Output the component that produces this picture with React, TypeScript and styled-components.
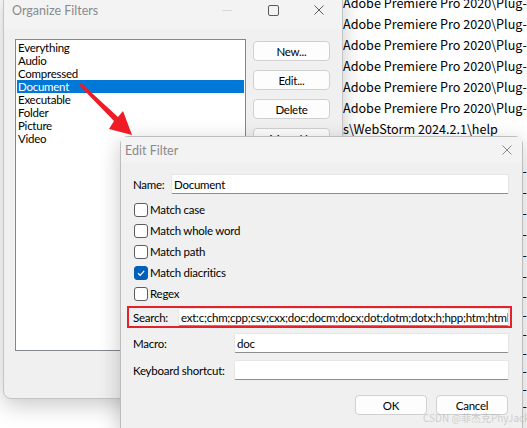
import React from "react";
import styled, { createGlobalStyle } from "styled-components";

const Global = createGlobalStyle`
  html, body { margin: 0; padding: 0; background: #ffffff; }
  body { width: 527px; height: 428px; overflow: hidden; }
  * { box-sizing: border-box; }
`;

const UI_FONT = `"Segoe UI", Lato, "Noto Sans", sans-serif`;

const Desktop = styled.div`
  position: relative;
  width: 527px;
  height: 428px;
  overflow: hidden;
  background: #ffffff;
  font-family: ${UI_FONT};
  font-size: 11.5px;
  letter-spacing: -0.25px;
  color: #000;
`;

const BackList = styled.div`
  position: absolute;
  left: 343px;
  top: -8px;
  display: flex;
  flex-direction: column;
  font-family: "Noto Sans CJK SC", "Noto Sans", sans-serif;
  font-size: 12.6px;
  letter-spacing: 0;
  color: #000;
  white-space: nowrap;
`;

const BackLine = styled.div<{ $h: number }>`
  height: ${(p) => p.$h}px;
  line-height: ${(p) => p.$h}px;
`;

const Win = styled.div`
  position: absolute;
  background: #f0f0f0;
  border: 1px solid #c4c4c4;
  box-shadow: 0 6px 22px rgba(0, 0, 0, 0.22);
  display: flex;
  flex-direction: column;
`;

const OrganizeWin = styled(Win)`
  left: 3px;
  top: -10px;
  width: 340px;
  height: 409px;
  border-radius: 8px;
`;

const TitleBar = styled.div<{ $h: number }>`
  height: ${(p) => p.$h}px;
  flex: none;
  display: flex;
  align-items: center;
  background: #f3f3f3;
  color: #8a8a8a;
  font-size: 12.5px;
  letter-spacing: 0;
  position: relative;
`;

const TitleText = styled.span<{ $pl: number }>`
  padding-left: ${(p) => p.$pl}px;
  flex: 1;
`;

const Caption = styled.div`
  display: flex;
  align-items: center;
  height: 100%;
`;

const CapBtn = styled.div<{ $w: number }>`
  width: ${(p) => p.$w}px;
  height: 100%;
  display: flex;
  align-items: center;
  justify-content: center;
`;

const OrgBody = styled.div`
  flex: 1;
  display: flex;
  gap: 7px;
  padding: 10px 0 0 11px;
`;

const ListBox = styled.div`
  width: 231px;
  height: 312px;
  background: #fff;
  border: 1px solid #828790;
  padding: 1px;
  display: flex;
  flex-direction: column;
`;

const ListItem = styled.div<{ $sel?: boolean }>`
  height: 13px;
  line-height: 13px;
  padding-left: 1px;
  background: ${(p) => (p.$sel ? "#0078d7" : "transparent")};
  color: ${(p) => (p.$sel ? "#fff" : "#000")};
  white-space: nowrap;
`;

const ButtonCol = styled.div`
  display: flex;
  flex-direction: column;
  gap: 9px;
  padding-top: 2px;
`;

const Btn = styled.div<{ $w: number }>`
  width: ${(p) => p.$w}px;
  height: 20px;
  background: #fdfdfd;
  border: 1px solid #d0d0d0;
  border-radius: 4px;
  display: flex;
  align-items: center;
  justify-content: center;
  color: #000;
`;

const EditWin = styled(Win)`
  left: 120px;
  top: 136px;
  width: 403px;
  height: 300px;
  border-radius: 8px 8px 0 0;
  border-color: #bdbdbd;
`;

const EditBody = styled.div`
  flex: 1;
  display: flex;
  flex-direction: column;
  padding: 11px 13px 0 12px;
`;

const FieldRow = styled.div<{ $mt?: number }>`
  display: flex;
  align-items: center;
  height: 20px;
  margin-top: ${(p) => p.$mt ?? 0}px;
`;

const Label = styled.div<{ $w: number }>`
  width: ${(p) => p.$w}px;
  flex: none;
  white-space: nowrap;
`;

const Input = styled.div<{ $h?: number }>`
  flex: 1;
  height: ${(p) => p.$h ?? 20}px;
  background: #fff;
  border: 1px solid #e5e5e5;
  border-bottom-color: #8d8d8d;
  border-radius: 2px;
  display: flex;
  align-items: center;
  padding-left: 2px;
  overflow: hidden;
  white-space: nowrap;
`;

const Checks = styled.div`
  display: flex;
  flex-direction: column;
  margin-top: 5px;
`;

const CheckRow = styled.div`
  height: 21px;
  display: flex;
  align-items: center;
  gap: 2px;
  padding-left: 1px;
`;

const Box = styled.div<{ $on?: boolean }>`
  width: 14px;
  height: 14px;
  border-radius: 3px;
  border: 1px solid ${(p) => (p.$on ? "#005fb8" : "#5d5d5d")};
  background: ${(p) => (p.$on ? "#005fb8" : "#fff")};
  display: flex;
  align-items: center;
  justify-content: center;
`;

const SearchFrame = styled.div`
  margin: 2px -3px 0 -6px;
  height: 22px;
  border: 2px solid #e4222b;
  display: flex;
  align-items: center;
  padding: 0 1px 0 4px;
`;

const Footer = styled.div`
  display: flex;
  justify-content: flex-end;
  gap: 9px;
  margin-top: 15px;
  padding-right: 1px;
`;

const Watermark = styled.div`
  position: absolute;
  left: 423px;
  top: 410px;
  font-family: "Noto Sans CJK SC", "Noto Sans", sans-serif;
  font-size: 10px;
  letter-spacing: 0;
  color: rgba(170, 170, 170, 0.5);
  white-space: nowrap;
`;

const Overlay = styled.svg`
  position: absolute;
  left: 0;
  top: 0;
  pointer-events: none;
`;

const backLines: [string, number][] = [
  ["Adobe Premiere Pro 2020\\Plug-", 21],
  ["Adobe Premiere Pro 2020\\Plug-", 21],
  ["Adobe Premiere Pro 2020\\Plug-", 21],
  ["Adobe Premiere Pro 2020\\Plug-", 21],
  ["Adobe Premiere Pro 2020\\Plug-", 21],
  ["Adobe Premiere Pro 2020\\Plug-", 21],
  ["s\\WebStorm 2024.2.1\\help", 21],
  ["s\\WebStorm 2024.2.1\\help", 21],
  ["Adobe Premiere Pro 2020\\Plug-ins\\la", 21],
  ["Adobe Premiere Pro 2020\\Plug-ins\\la", 21],
  ["Adobe Premiere Pro 2020\\Plug-ins\\e", 21],
  ["Adobe Premiere Pro 2020\\Plug-ins\\e", 21],
  ["Adobe Premiere Pro 2020\\Plug-ins\\la", 21],
  ["Adobe Premiere Pro 2020\\Plug-ins\\la", 21],
  ["Adobe Premiere Pro 2020\\Plug-ins\\x", 19],
  ["Adobe Premiere Pro 2020\\Plug-ins\\x", 19],
  ["Adobe Premiere Pro 2020\\Plug-ins\\e", 19],
  ["Adobe Premiere Pro 2020\\Plug-ins\\e", 19],
  ["Adobe Premiere Pro 2020\\Plug-ins\\e", 18],
  ["Adobe Premiere Pro 2020\\Plug-ins\\e", 17],
  ["Adobe Premiere Pro 2020\\Plug-ins\\e", 17],
];

const items = [
  "Everything",
  "Audio",
  "Compressed",
  "Document",
  "Executable",
  "Folder",
  "Picture",
  "Video",
];

const checks: [string, boolean][] = [
  ["Match case", false],
  ["Match whole word", false],
  ["Match path", false],
  ["Match diacritics", true],
  ["Regex", false],
];

const CloseIcon = ({ c = "#5a5a5a", s = 10 }: { c?: string; s?: number }) => (
  <svg width={s} height={s} viewBox="0 0 10 10">
    <path d="M0.5 0.5 L9.5 9.5 M9.5 0.5 L0.5 9.5" stroke={c} strokeWidth="1" />
  </svg>
);

export default function App() {
  return (
    <Desktop>
      <Global />
      <BackList>
        {backLines.map(([t, h], i) => (
          <BackLine key={i} $h={h}>
            {t}
          </BackLine>
        ))}
      </BackList>

      <OrganizeWin>
        <TitleBar $h={38}>
          <TitleText $pl={8}>Organize Filters</TitleText>
          <Caption>
            <CapBtn $w={46}>
              <svg width="10" height="10" viewBox="0 0 10 10">
                <path d="M0 5.5 H10" stroke="#d8d8d8" strokeWidth="1" />
              </svg>
            </CapBtn>
            <CapBtn $w={46}>
              <svg width="11" height="11" viewBox="0 0 11 11">
                <rect x="0.5" y="0.5" width="10" height="10" rx="1.5" fill="none" stroke="#5a5a5a" />
              </svg>
            </CapBtn>
            <CapBtn $w={46}>
              <CloseIcon />
            </CapBtn>
          </Caption>
        </TitleBar>
        <OrgBody>
          <ListBox>
            {items.map((t) => (
              <ListItem key={t} $sel={t === "Document"}>
                {t}
              </ListItem>
            ))}
          </ListBox>
          <ButtonCol>
            <Btn $w={77}>New...</Btn>
            <Btn $w={77}>Edit...</Btn>
            <Btn $w={77}>Delete</Btn>
            <Btn $w={77}>Move Up</Btn>
          </ButtonCol>
        </OrgBody>
      </OrganizeWin>

      <EditWin>
        <TitleBar $h={26}>
          <TitleText $pl={4}>Edit Filter</TitleText>
          <CapBtn $w={30}>
            <CloseIcon c="#8a8a8a" />
          </CapBtn>
        </TitleBar>
        <EditBody>
          <FieldRow>
            <Label $w={38}>Name:</Label>
            <Input>Document</Input>
          </FieldRow>
          <Checks>
            {checks.map(([t, on]) => (
              <CheckRow key={t}>
                <Box $on={on}>
                  {on && (
                    <svg width="10" height="10" viewBox="0 0 10 10">
                      <path d="M2 5.2 L4.2 7.3 L8.2 2.8" fill="none" stroke="#fff" strokeWidth="1.2" />
                    </svg>
                  )}
                </Box>
                <span>{t}</span>
              </CheckRow>
            ))}
          </Checks>
          <SearchFrame>
            <Label $w={45}>Search:</Label>
            <Input $h={18}>ext:c;chm;cpp;csv;cxx;doc;docm;docx;dot;dotm;dotx;h;hpp;htm;html;hxx;ini;java;lua;mht</Input>
          </SearchFrame>
          <FieldRow $mt={5}>
            <Label $w={101}>Macro:</Label>
            <Input>doc</Input>
          </FieldRow>
          <FieldRow $mt={7}>
            <Label $w={101}>Keyboard shortcut:</Label>
            <Input />
          </FieldRow>
          <Footer>
            <Btn $w={72}>OK</Btn>
            <Btn $w={72}>Cancel</Btn>
          </Footer>
        </EditBody>
      </EditWin>

      <Watermark>CSDN @菲杰克PhyJack</Watermark>

      <Overlay width="527" height="428" viewBox="0 0 527 428">
        <path
          d="M79 85 L81 83 L118 117 L123 111 L132 135 L109 129 L114 121 Z"
          fill="#ee1c24"
        />
      </Overlay>
    </Desktop>
  );
}
